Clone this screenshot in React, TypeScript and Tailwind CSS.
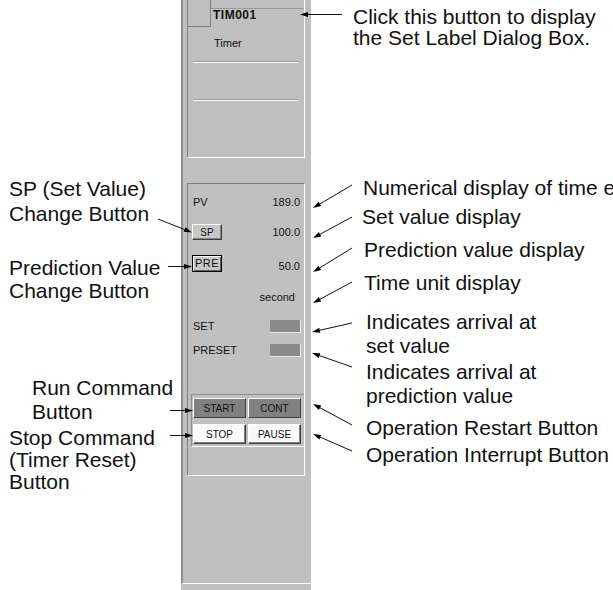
import React from "react";

type ArrowProps = { x1: number; y1: number; x2: number; y2: number };

const Arrow = ({ x1, y1, x2, y2 }: ArrowProps) => {
  const dx = x2 - x1;
  const dy = y2 - y1;
  const len = Math.hypot(dx, dy);
  const ux = dx / len;
  const uy = dy / len;
  const bx = x2 - ux * 8;
  const by = y2 - uy * 8;
  const pts = `${x2},${y2} ${bx - uy * 2.5},${by + ux * 2.5} ${bx + uy * 2.5},${by - ux * 2.5}`;
  return (
    <g>
      <line x1={x1} y1={y1} x2={bx} y2={by} stroke="#111" strokeWidth={1} />
      <polygon points={pts} fill="#000" />
    </g>
  );
};

const arrows: ArrowProps[] = [
  { x1: 342, y1: 14.5, x2: 300, y2: 14.5 },
  { x1: 352, y1: 185, x2: 313, y2: 208 },
  { x1: 352, y1: 217, x2: 313, y2: 238 },
  { x1: 352, y1: 248, x2: 313, y2: 272 },
  { x1: 352, y1: 282, x2: 313, y2: 303 },
  { x1: 352, y1: 323, x2: 312, y2: 332 },
  { x1: 352, y1: 367, x2: 312, y2: 353 },
  { x1: 352, y1: 425, x2: 313, y2: 404 },
  { x1: 352, y1: 451, x2: 313, y2: 434 },
  { x1: 158, y1: 219, x2: 192, y2: 232.5 },
  { x1: 168, y1: 266.5, x2: 192, y2: 266.5 },
  { x1: 170, y1: 410.5, x2: 193, y2: 410.5 },
  { x1: 170, y1: 435.5, x2: 193, y2: 435.5 },
];

const bevel =
  "border border-t-white border-l-white border-r-[#404040] border-b-[#404040] shadow-[inset_-1px_-1px_0_#808080]";

const ValueRow = ({ children, top, h }: { children: React.ReactNode; top: string; h: string }) => (
  <div className={`flex items-center justify-between pr-[4px] ${top} ${h}`}>{children}</div>
);

const Panel = () => (
  <div className="w-[130px] shrink-0 flex flex-col">
    <div className="h-[584px] bg-[#c0c0c0] border-l-2 border-[#8c8c8c] border-b border-b-white pl-[4px] text-[11px] leading-[13px] text-[#111]">
      {/* label box */}
      <div className="w-[118px] h-[158px] border-l border-l-[#808080] border-r border-r-white border-b border-b-white flex flex-col">
        <div className="flex h-[27px]">
          <div className="w-[23px] h-[27px] border-r border-b border-[#808080]" />
          <div className="flex-1 mt-[8px] border-t border-[#9a9a9a] pl-[2px] text-[12px] font-bold tracking-[0.5px] leading-[13px]">
            TIM001
          </div>
        </div>
        <div className="mt-[10px] pl-[26px] leading-[13px]">Timer</div>
        <div className="mt-[11px] ml-[5px] mr-[6px] border-t border-[#9a9a9a] border-b border-b-white" />
        <div className="mt-[36px] ml-[5px] mr-[6px] border-t border-[#9a9a9a] border-b border-b-white" />
      </div>

      {/* values box */}
      <div className="mt-[25px] w-[118px] h-[293px] border-t border-l border-[#808080] border-r border-r-white border-b border-b-white flex flex-col">
        <ValueRow top="mt-[10px]" h="h-[16px]">
          <span className="pl-[5px]">PV</span>
          <span>189.0</span>
        </ValueRow>
        <ValueRow top="mt-[14px]" h="h-[16px]">
          <div className={`ml-[4px] w-[30px] h-[16px] bg-[#c8c8c8] flex items-center justify-center text-[10px] ${bevel}`}>
            SP
          </div>
          <span>100.0</span>
        </ValueRow>
        <ValueRow top="mt-[15px]" h="h-[17px]">
          <div className="ml-[4px] w-[30px] h-[17px] border border-black bg-[#c8c8c8] shadow-[inset_1px_1px_0_#fff,inset_-1px_-1px_0_#606060] flex items-center justify-center text-[11px] tracking-[0.5px]">
            PRE
          </div>
          <span className="pt-[5px]">50.0</span>
        </ValueRow>
        <div className="mt-[18px] h-[14px] flex items-center justify-end pr-[9px]">second</div>
        <div className="mt-[16px] h-[13px] flex items-center justify-between pr-[3px]">
          <span className="pl-[5px]">SET</span>
          <div className="w-[31px] h-[13px] bg-[#8a8a8a] border-r border-b border-[#e8e8e8]" />
        </div>
        <div className="mt-[11px] h-[13px] flex items-center justify-between pr-[3px]">
          <span className="pl-[5px]">PRESET</span>
          <div className="w-[31px] h-[13px] bg-[#8a8a8a] border-r border-b border-[#e8e8e8]" />
        </div>
        <div className="mt-[37px] ml-[3px] border-t border-l border-[#8c8c8c] border-b border-b-white pt-[3px] pb-[2px] pl-[1px] flex flex-col gap-[6px] text-[10px]">
          <div className="flex gap-[2px]">
            <div className={`w-[53px] h-[20px] bg-[#808080] flex items-center justify-center ${bevel} border-t-[#c8c8c8] border-l-[#c8c8c8]`}>
              START
            </div>
            <div className={`w-[53px] h-[20px] bg-[#808080] flex items-center justify-center ${bevel} border-t-[#c8c8c8] border-l-[#c8c8c8]`}>
              CONT
            </div>
          </div>
          <div className="flex gap-[2px]">
            <div className={`w-[53px] h-[20px] bg-[#fafafa] flex items-center justify-center ${bevel}`}>STOP</div>
            <div className={`w-[53px] h-[20px] bg-[#fafafa] flex items-center justify-center ${bevel}`}>PAUSE</div>
          </div>
        </div>
      </div>
    </div>
    <div className="flex-1 bg-[#c0c0c0]" />
  </div>
);

export default function App() {
  return (
    <div className="relative w-[613px] h-[590px] overflow-hidden bg-white flex font-['Liberation_Sans',Arial,sans-serif] text-[#111]">
      {/* left callouts */}
      <div className="w-[181px] shrink-0 flex flex-col text-[21px] whitespace-nowrap">
        <div className="mt-[176px] pl-[9px] leading-[25px]">
          SP (Set Value)
          <br />
          Change Button
        </div>
        <div className="mt-[30px] pl-[9px] leading-[23px]">
          Prediction Value
          <br />
          Change Button
        </div>
        <div className="mt-[74px] pl-[32px] leading-[24px]">
          Run Command
          <br />
          Button
        </div>
        <div className="mt-[3px] pl-[9px] leading-[22px]">
          Stop Command
          <br />
          (Timer Reset)
          <br />
          Button
        </div>
      </div>

      <Panel />

      {/* right callouts */}
      <div className="flex-1 flex flex-col text-[21px] leading-[23px] whitespace-nowrap pt-[6px]">
        <div className="ml-[42px] leading-[21px]">
          Click this button to display
          <br />
          the Set Label Dialog Box.
        </div>
        <div className="mt-[128px] ml-[52px]">Numerical display of time elapsed</div>
        <div className="mt-[6px] ml-[51px]">Set value display</div>
        <div className="mt-[10px] ml-[53px]">Prediction value display</div>
        <div className="mt-[10px] ml-[53px]">Time unit display</div>
        <div className="mt-[16px] ml-[55px] leading-[24px]">
          Indicates arrival at
          <br />
          set value
        </div>
        <div className="mt-[2px] ml-[55px] leading-[24px]">
          Indicates arrival at
          <br />
          prediction value
        </div>
        <div className="mt-[8px] ml-[55px]">Operation Restart Button</div>
        <div className="mt-[4px] ml-[55px]">Operation Interrupt Button</div>
      </div>

      <svg className="absolute inset-0 pointer-events-none" width={613} height={590}>
        {arrows.map((a, i) => (
          <Arrow key={i} {...a} />
        ))}
      </svg>
    </div>
  );
}
